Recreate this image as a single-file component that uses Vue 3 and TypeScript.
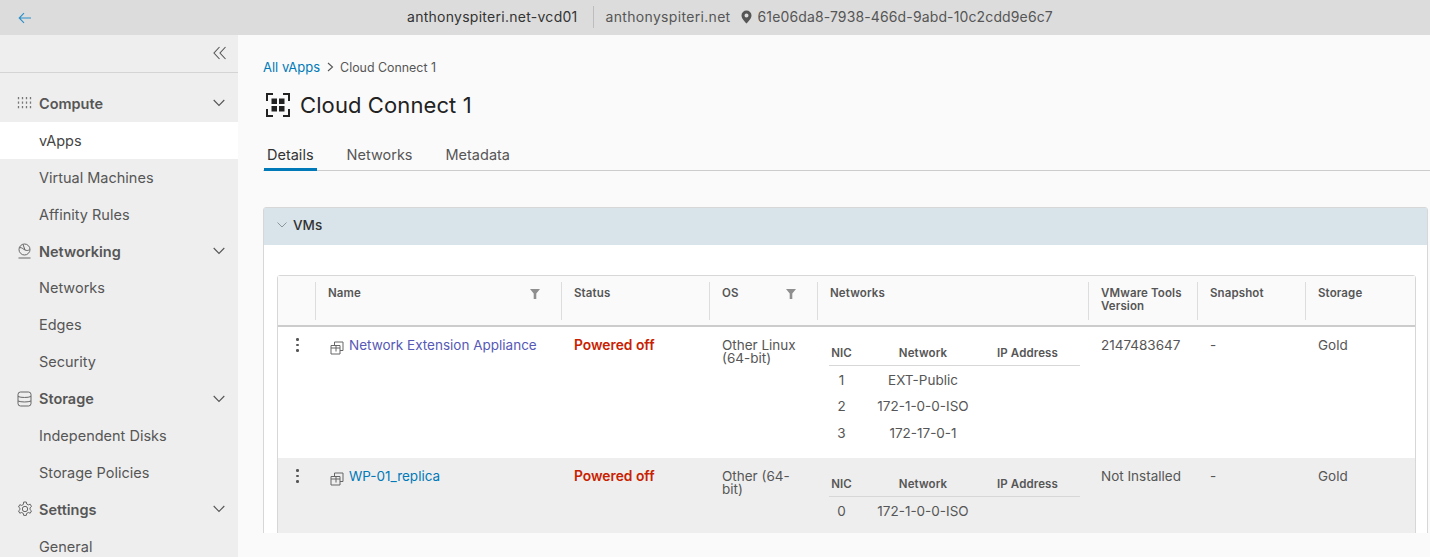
<script setup lang="ts">
interface NicRow { nic: string; network: string }
interface Vm { name: string; os: string; tools: string; nics: NicRow[]; visited?: boolean; alt?: boolean }
const groups = [
  { label: 'Compute', icon: 'compute', items: ['vApps', 'Virtual Machines', 'Affinity Rules'] },
  { label: 'Networking', icon: 'net', items: ['Networks', 'Edges', 'Security'] },
  { label: 'Storage', icon: 'storage', items: ['Independent Disks', 'Storage Policies'] },
  { label: 'Settings', icon: 'settings', items: ['General'] },
]
const columns = [
  { label: '' }, { label: 'Name', filter: true }, { label: 'Status' }, { label: 'OS', filter: true },
  { label: 'Networks' }, { label: 'VMware Tools Version' }, { label: 'Snapshot' }, { label: 'Storage' },
]
const vms: Vm[] = [
  { name: 'Network Extension Appliance', os: 'Other Linux (64-bit)', tools: '2147483647', visited: true,
    nics: [{ nic: '1', network: 'EXT-Public' }, { nic: '2', network: '172-1-0-0-ISO' }, { nic: '3', network: '172-17-0-1' }] },
  { name: 'WP-01_replica', os: 'Other (64-bit)', tools: 'Not Installed', alt: true,
    nics: [{ nic: '0', network: '172-1-0-0-ISO' }] },
]
</script>

<template>
  <div class="app">
    <header class="topbar">
      <svg class="back" width="14" height="12" viewBox="0 0 14 12"><path d="M13 6H1.500M6 1.200 1.200 6 6 10.800" fill="none" stroke="#2a8fc7" stroke-width="1.100"/></svg>
      <div class="topinfo">
        <span class="site">anthonyspiteri.net-vcd01</span>
        <span class="vsep"></span>
        <span class="org">anthonyspiteri.net</span>
        <svg class="pin" width="11" height="14" viewBox="0 0 11 14"><path fill-rule="evenodd" d="M5.500.5a5 5 0 0 1 5 5c0 3-3 5.800-5 8-2-2.200-5-5-5-8a5 5 0 0 1 5-5Zm0 3a2 2 0 1 0 0 4 2 2 0 0 0 0-4Z" fill="#555"/></svg>
        <span class="uuid">61e06da8-7938-466d-9abd-10c2cdd9e6c7</span>
      </div>
    </header>
    <div class="body">
      <aside class="sidebar">
        <div class="collapse">
          <svg width="14" height="14" viewBox="0 0 14 14"><path d="M6.500 1 1 7l5.500 6M12.500 1 7 7l5.500 6" fill="none" stroke="#555" stroke-width="1.100"/></svg>
        </div>
        <nav class="nav">
          <template v-for="g in groups" :key="g.label">
            <div class="group">
              <span class="gicon">
                <svg v-if="g.icon === 'compute'" width="15" height="14" viewBox="0 0 15 14" fill="none" stroke="#777" stroke-width="1.300" stroke-dasharray="2.200 2.300"><path d="M1.500 1v13M5.500 1v13M9.500 1v13M13.500 1v13"/></svg>
                <svg v-else-if="g.icon === 'net'" width="15" height="16" viewBox="0 0 15 16" fill="none" stroke="#666" stroke-width="1"><circle cx="7.500" cy="6.500" r="5.500"/><path d="M2.500 4.500c3 0 4 2 5.500 2.500s3 1 4.500-.5M6 1.500 8 7M1.500 15h12"/></svg>
                <svg v-else-if="g.icon === 'storage'" width="15" height="16" viewBox="0 0 15 16" fill="none" stroke="#666" stroke-width="1"><rect x="1" y="1" width="13" height="14" rx="2.500"/><path d="M1 5.500c3 1.300 10 1.300 13 0M1 10c3 1.300 10 1.300 13 0"/></svg>
                <svg v-else width="16" height="16" viewBox="0 0 16 16" fill="none" stroke="#666" stroke-width="1"><circle cx="8" cy="8" r="2.700"/><path d="M6.700 1h2.600l.4 2 1.600.9 1.900-.7 1.300 2.300-1.500 1.300v1.800l1.500 1.300-1.300 2.300-1.900-.7-1.600.9-.4 2H6.700l-.4-2-1.600-.9-1.900.7-1.300-2.300 1.500-1.300V7.300L1.500 6l1.300-2.300 1.900.7 1.600-.9Z"/></svg>
              </span>
              <span class="glabel">{{ g.label }}</span>
              <svg class="chev" width="12" height="8" viewBox="0 0 12 8"><path d="M.7 1 6 6.500 11.300 1" fill="none" stroke="#555" stroke-width="1.100"/></svg>
            </div>
            <a v-for="item in g.items" :key="item" class="item" :class="{ active: item === 'vApps' }">{{ item }}</a>
          </template>
        </nav>
      </aside>
      <main class="main">
        <div class="scroll">
          <div class="crumbs">
            <a class="link">All vApps</a>
            <svg width="7" height="10" viewBox="0 0 7 10"><path d="M1 1l4.500 4L1 9" fill="none" stroke="#555" stroke-width="1.100"/></svg>
            <span class="here">Cloud Connect 1</span>
          </div>
          <div class="title">
            <svg width="26" height="26" viewBox="0 0 26 26" fill="none" stroke="#222" stroke-width="2"><path d="M8 2H2v7M18 2h6v7M8 24H2v-7M18 24h6v-7"/><g fill="#222" stroke="none"><rect x="6.500" y="6.500" width="5.500" height="5.500"/><rect x="14" y="6.500" width="5.500" height="5.500"/><rect x="6.500" y="14" width="5.500" height="5.500"/><rect x="14" y="14" width="5.500" height="5.500"/></g></svg>
            <h1>Cloud Connect 1</h1>
          </div>
          <div class="tabs">
            <span class="tab on">Details</span>
            <span class="tab">Networks</span>
            <span class="tab">Metadata</span>
          </div>
          <section class="card">
            <div class="cardhead">
              <svg width="10" height="6" viewBox="0 0 10 6"><path d="M.5.500 5 5 9.500.5" fill="none" stroke="#8a969c" stroke-width="1"/></svg>
              <span>VMs</span>
            </div>
            <div class="cardbody">
              <div class="grid">
                <div class="row head">
                  <div v-for="(c, i) in columns" :key="i" class="th" :class="{ first: i === 0 }">
                    <span class="thlabel">{{ c.label }}</span>
                    <svg v-if="c.filter" class="filter" width="10" height="10" viewBox="0 0 10 10"><path d="M0 0h10L6.300 4.500V10H3.700V4.500Z" fill="#8f8f8f"/></svg>
                  </div>
                </div>
                <div v-for="vm in vms" :key="vm.name" class="row data" :class="{ alt: vm.alt }">
                  <div class="td kebab"><i></i><i></i><i></i></div>
                  <div class="td namecell">
                    <svg class="vmicon" width="14" height="14" viewBox="0 0 14 14" fill="none" stroke="#666" stroke-width="1"><path d="M4.500 4V1h8.500v8.500h-3M1 4.500h9V13H1ZM1 7h9M6 4.500V10.500"/></svg>
                    <a class="link" :class="{ visited: vm.visited }">{{ vm.name }}</a>
                  </div>
                  <div class="td off">Powered off</div>
                  <div class="td os">{{ vm.os }}</div>
                  <div class="td nets">
                    <table class="nictable">
                      <thead><tr><th class="c1">NIC</th><th class="c2">Network</th><th class="c3">IP Address</th></tr></thead>
                      <tbody><tr v-for="n in vm.nics" :key="n.nic"><td>{{ n.nic }}</td><td>{{ n.network }}</td><td></td></tr></tbody>
                    </table>
                  </div>
                  <div class="td">{{ vm.tools }}</div>
                  <div class="td">-</div>
                  <div class="td">Gold</div>
                </div>
              </div>
            </div>
          </section>
        </div>
      </main>
    </div>
  </div>
</template>

<style>
html, body { margin: 0; height: 100%; overflow: hidden; }
</style>

<style scoped>
.app { width: 1430px; height: 557px; display: flex; flex-direction: column; overflow: hidden; font-family: Inter, "Noto Sans", sans-serif; color: #565656; background: #fafafa; }
.topbar { height: 35px; flex: none; background: #dcdcdc; display: flex; align-items: center; padding-left: 18px; }
.topinfo { display: flex; align-items: center; margin-left: 375px; font-size: 14px; line-height: 33px; height: 35px; padding-bottom: 2px; box-sizing: border-box; }
.site { color: #333; letter-spacing: .27px; }
.vsep { width: 1px; height: 22px; background: #bdbdbd; margin: 0 12px 0 15px; }
.org { color: #565656; letter-spacing: .32px; }
.uuid { color: #565656; letter-spacing: .13px; }
.pin { margin: 0 6px 0 10px; }
.body { flex: 1; display: flex; min-height: 0; }
.sidebar { width: 238px; flex: none; background: #eee; overflow: hidden; }
.collapse { box-sizing: border-box; height: 38px; border-bottom: 1px solid #d4d4d4; display: flex; justify-content: flex-end; align-items: center; padding: 0 11px 2px 0; }
.nav { padding-top: 12px; font-size: 14.500px; }
.group { height: 36.900px; display: flex; align-items: center; padding: 0 13px 0 17px; font-weight: 600; color: #565656; }
.gicon { width: 22px; display: flex; align-items: center; }
.glabel { flex: 1; }
.item { display: flex; align-items: center; height: 36.900px; padding-left: 39px; color: #565656; }
.item.active { background: #fff; color: #454545; }
.main { flex: 1; min-width: 0; display: flex; flex-direction: column; }
.scroll { height: 498px; overflow: hidden; padding-left: 25px; box-sizing: border-box; }
.crumbs { display: flex; align-items: center; gap: 7px; margin-top: 22px; height: 20px; font-size: 13px; }
.here { font-size: 12.400px; margin-left: -1px; }
.link { color: #0079b8; }
.link.visited { color: #5659b6; }
.title { display: flex; align-items: center; gap: 9px; margin: 8px 0 0 2px; height: 40px; }
.title h1 { margin: 0; font-size: 22px; font-weight: 400; color: #222; letter-spacing: .1px; }
.tabs { display: flex; margin-top: 10px; height: 36px; box-sizing: border-box; border-bottom: 1px solid #ccc; width: 1167px; gap: 27px; font-size: 14.500px; padding-left: 1px; }
.tab { display: flex; align-items: center; padding: 2px 3px 0; margin-bottom: -1px; height: 36px; box-sizing: border-box; }
.tab.on { color: #333; border-bottom: 3px solid #0079b8; padding-top: 5px; }
.card { margin-top: 36px; width: 1165px; border: 1px solid #d7d7d7; border-radius: 3px; box-sizing: border-box; background: #fff; }
.cardhead { height: 37px; background: #d9e4ea; display: flex; align-items: center; gap: 6px; padding: 0 0 3px 13px; box-sizing: border-box; font-size: 13.500px; font-weight: 500; color: #333; }
.cardbody { padding: 30px 13px 0; }
.grid { border: 1px solid #d7d7d7; border-radius: 3px; width: 1139px; box-sizing: border-box; }
.row { display: grid; grid-template-columns: 37px 246px 148px 108px 271px 109px 108px 1fr; }
.head { height: 51px; background: #fafafa; border-bottom: 2px solid #ccc; box-sizing: border-box; padding-top: 6px; }
.th { height: 38px; border-left: 1px solid #ddd; padding: 5px 12px 0; font-size: 11.500px; font-weight: 600; line-height: 13px; letter-spacing: .12px; color: #565656; box-sizing: border-box; display: flex; justify-content: space-between; }
.th.first { border-left: none; }
.filter { margin: 2px 9px 0 0; flex: none; }
.data { height: 131px; background: #fff; font-size: 13.500px; line-height: 13px; }
.data.alt { height: 100px; background: #eee; }
.td { padding: 12px 12px 0 13px; color: #565656; box-sizing: border-box; min-width: 0; }
.kebab { display: flex; flex-direction: column; align-items: center; gap: 3px; padding: 11px 0 0 2px; width: 37px; }
.kebab i { width: 2.500px; height: 2.500px; border-radius: 50%; background: #565656; }
.namecell { display: flex; gap: 5px; align-items: flex-start; padding-right: 0; padding-left: 15px; }
.vmicon { margin-top: 2px; flex: none; }
.namecell .link { white-space: nowrap; }
.off { color: #c92100; font-weight: 600; font-size: 13.800px; }
.nets { padding: 19px 12px 0; }
.nictable { border-collapse: collapse; width: 246px; table-layout: fixed; font-size: 13.500px; }
.nictable th { font-size: 11.500px; font-weight: 600; letter-spacing: .12px; color: #565656; text-align: center; height: 14px; padding: 0 0 5px; border-bottom: 1px solid #d7d7d7; }
.c1 { width: 25px; } .c2 { width: 138px; } .nictable th.c3 { width: 83px; padding-left: 5px; text-align: left; white-space: nowrap; }
.nictable td { text-align: center; height: 26.600px; padding: 0; color: #565656; }
.nictable tbody tr:first-child td { padding-top: 1px; }
</style>
